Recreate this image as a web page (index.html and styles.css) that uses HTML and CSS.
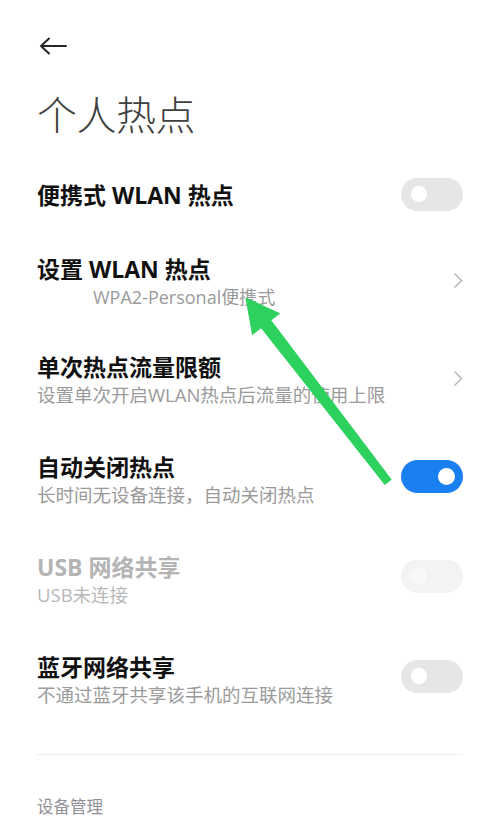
FILE: index.html
```html
<!DOCTYPE html>
<html lang="zh-CN">
<head>
<meta charset="utf-8">
<title>个人热点</title>
<link rel="stylesheet" href="styles.css">
</head>
<body>
<div class="page">
  <div class="topbar">
    <svg class="back" width="28" height="18" viewBox="0 0 28 18">
      <path d="M27 9 H2 M10 1.5 L2 9 L10 16.5" fill="none" stroke="#262626" stroke-width="2" stroke-linecap="round" stroke-linejoin="round"/>
    </svg>
  </div>
  <h1 class="title">个人热点</h1>

  <div class="row single">
    <div class="text"><div class="label">便携式 WLAN 热点</div></div>
    <div class="switch first"><span class="knob"></span></div>
  </div>

  <div class="row short">
    <div class="text">
      <div class="label">设置 WLAN 热点</div>
      <div class="sub indent">WPA2-Personal便携式</div>
    </div>
    <svg class="chev" width="10" height="17" viewBox="0 0 10 17"><polyline points="1.5,1.5 8.5,8.5 1.5,15.5" fill="none" stroke="#b8b8b8" stroke-width="1.5"/></svg>
  </div>

  <div class="row">
    <div class="text">
      <div class="label">单次热点流量限额</div>
      <div class="sub">设置单次开启WLAN热点后流量的使用上限</div>
    </div>
    <svg class="chev" width="10" height="17" viewBox="0 0 10 17"><polyline points="1.5,1.5 8.5,8.5 1.5,15.5" fill="none" stroke="#b8b8b8" stroke-width="1.5"/></svg>
  </div>

  <div class="row">
    <div class="text">
      <div class="label">自动关闭热点</div>
      <div class="sub">长时间无设备连接，自动关闭热点</div>
    </div>
    <div class="switch on"><span class="knob"></span></div>
  </div>

  <div class="row disabled">
    <div class="text">
      <div class="label">USB 网络共享</div>
      <div class="sub">USB未连接</div>
    </div>
    <div class="switch dim"><span class="knob"></span></div>
  </div>

  <div class="row">
    <div class="text">
      <div class="label">蓝牙网络共享</div>
      <div class="sub">不通过蓝牙共享该手机的互联网连接</div>
    </div>
    <div class="switch"><span class="knob"></span></div>
  </div>

  <div class="divider"></div>
  <div class="section">设备管理</div>

  <svg class="annot" width="500" height="840" viewBox="0 0 500 840">
    <polygon points="246,298 279.5,313.6 270.8,320.3 391.2,479.6 384.8,484.4 261.2,327.7 252.5,334.4" fill="#2dd25e" stroke="#2dd25e" stroke-width="1" stroke-linejoin="round"/>
  </svg>
</div>
</body>
</html>
```

FILE: styles.css
```css
html, body {
  margin: 0;
  padding: 0;
  background: #ffffff;
}

.page {
  position: relative;
  width: 500px;
  height: 840px;
  overflow: hidden;
  padding: 0 37px;
  box-sizing: border-box;
  font-family: "Open Sans", "Noto Sans CJK SC", sans-serif;
}

.topbar {
  height: 92px;
  display: flex;
  align-items: center;
}

.back {
  margin-left: 2px;
  display: block;
}

.title {
  margin: -2px 0 0 0;
  padding: 0 0 17px 0;
  height: 46px;
  font-family: "Noto Sans CJK SC Light", "Noto Sans CJK SC DemiLight", "Noto Sans CJK SC", sans-serif;
  font-size: 40px;
  line-height: 46px;
  font-weight: 300;
  color: #404040;
  letter-spacing: -0.5px;
}

.row {
  display: flex;
  align-items: center;
  justify-content: space-between;
  height: 56px;
  padding: 25px 0 19px 0;
}

.row.single {
  height: 30px;
  padding: 27px 0 19px 0;
}

.row.short {
  padding-bottom: 17px;
}

.text {
  display: flex;
  flex-direction: column;
}

.label {
  height: 30px;
  font-size: 23px;
  line-height: 30px;
  font-weight: 700;
  color: #111111;
  white-space: nowrap;
}

.sub {
  height: 26px;
  font-size: 18.5px;
  line-height: 26px;
  color: #9a9a9a;
  white-space: nowrap;
}

.sub.indent {
  margin-left: 56px;
  font-size: 18px;
}

.disabled .label {
  color: #b4b4b4;
}

.disabled .sub {
  color: #b8b8b8;
}

.chev {
  display: block;
  margin-bottom: 3px;
}

.switch {
  position: relative;
  width: 62px;
  height: 33px;
  border-radius: 17px;
  background: #e6e6e6;
  flex: none;
  margin-bottom: 8px;
}

.switch.first {
  margin-bottom: 2px;
}

.switch .knob {
  position: absolute;
  left: 10px;
  top: 8.5px;
  width: 16px;
  height: 16px;
  border-radius: 50%;
  background: #ffffff;
}

.switch.on {
  background: #1a7ff0;
}

.switch.on .knob {
  left: auto;
  right: 8px;
  top: 8px;
  width: 17px;
  height: 17px;
}

.switch.dim {
  background: #f3f3f3;
}

.switch.dim .knob {
  background: #f8f8f8;
}

.divider {
  margin-top: 27px;
  height: 1px;
  background: #eeeeee;
}

.section {
  margin-top: 39px;
  height: 24px;
  font-family: "Noto Sans CJK SC", sans-serif;
  font-size: 16.5px;
  line-height: 24px;
  color: #8f9096;
}

.annot {
  position: absolute;
  left: 0;
  top: 0;
  pointer-events: none;
}
```
